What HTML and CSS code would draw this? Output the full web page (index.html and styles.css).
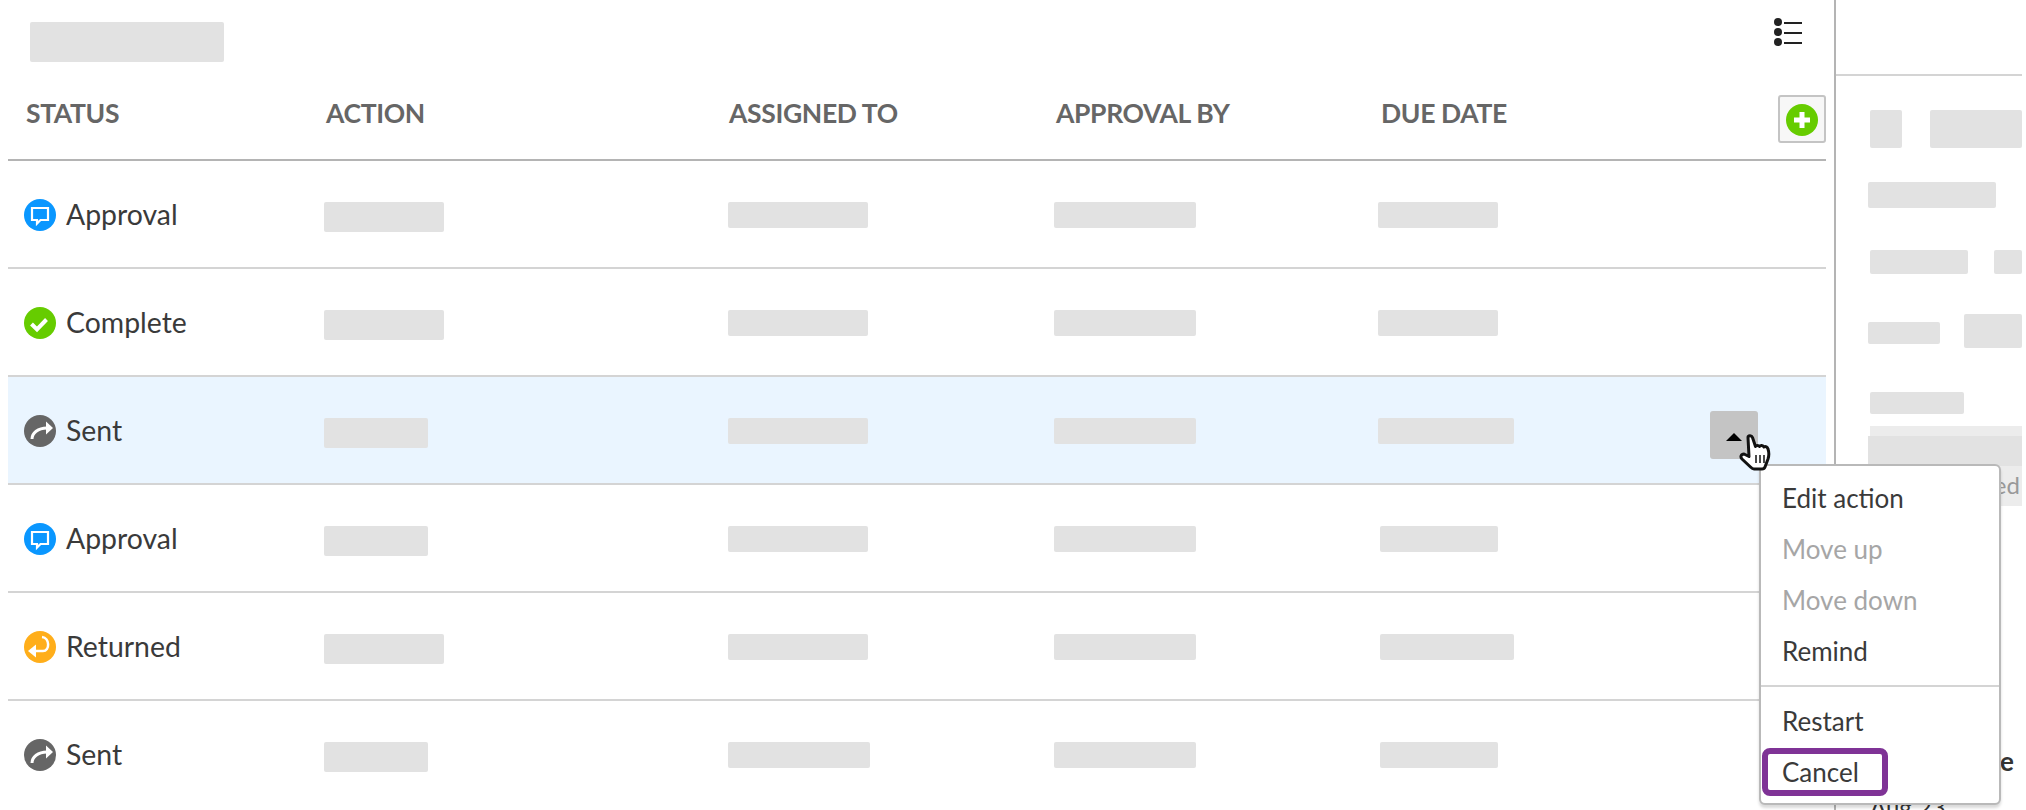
FILE: index.html
```html
<!DOCTYPE html>
<html lang="en">
<head>
<meta charset="utf-8">
<title>Actions</title>
<link rel="stylesheet" href="styles.css">
</head>
<body>
<div class="page">
  <main class="main">
    <div class="top">
      <div class="ph title-ph"></div>
      <svg class="list-icon" width="32" height="32" viewBox="0 0 32 32"><circle cx="6" cy="6" r="4"/><circle cx="6" cy="16" r="4"/><circle cx="6" cy="26" r="4"/><rect x="12" y="6" width="18" height="2"/><rect x="12" y="16" width="18" height="2"/><rect x="12" y="26" width="18" height="2"/></svg>
    </div>
    <div class="row head">
      <div class="hc first">STATUS</div><div class="hc">ACTION</div><div class="hc assigned">ASSIGNED TO</div><div class="hc">APPROVAL BY</div><div class="hc due">DUE DATE</div>
      <div class="add"><svg width="32" height="32" viewBox="0 0 32 32"><circle cx="16" cy="16" r="16" fill="#66cc00"/><path d="M8 16h16M16 8v16" stroke="#fff" stroke-width="5"/></svg></div>
    </div>
    <div class="row">
      <div class="status"><svg class="ico" viewBox="0 0 32 32"><circle cx="16" cy="16" r="16" fill="#0a97ff"/><path d="M8 9h16v12h-7.500l-3.500 3.500v-3.500h-5z" fill="none" stroke="#fff" stroke-width="2.200"/></svg>Approval</div>
      <div class="ph w120"></div><div class="ph w140"></div><div class="ph w142"></div><div class="ph w120"></div>
    </div>
    <div class="row">
      <div class="status"><svg class="ico" viewBox="0 0 32 32"><circle cx="16" cy="16" r="16" fill="#66cc00"/><path d="M7.500 17l5.500 5.500 9.500-10" fill="none" stroke="#fff" stroke-width="4"/></svg>Complete</div>
      <div class="ph w120"></div><div class="ph w140"></div><div class="ph w142"></div><div class="ph w120"></div>
    </div>
    <div class="row active">
      <div class="status"><svg class="ico" viewBox="0 0 32 32"><circle cx="16" cy="16" r="16" fill="#666"/><path d="M8 24c0-6 6-11 15-11" fill="none" stroke="#fff" stroke-width="3"/><path d="M22 6.500l7 6.500-7 6.500z" fill="#fff"/></svg>Sent</div>
      <div class="ph w104"></div><div class="ph w140"></div><div class="ph w142"></div><div class="ph w136"></div>
      <div class="toggle"><span class="caret"></span></div>
    </div>
    <div class="row">
      <div class="status"><svg class="ico" viewBox="0 0 32 32"><circle cx="16" cy="16" r="16" fill="#0a97ff"/><path d="M8 9h16v12h-7.500l-3.500 3.500v-3.500h-5z" fill="none" stroke="#fff" stroke-width="2.200"/></svg>Approval</div>
      <div class="ph w104"></div><div class="ph w140"></div><div class="ph w142"></div><div class="ph w118 nudge"></div>
    </div>
    <div class="row">
      <div class="status"><svg class="ico" viewBox="0 0 32 32"><circle cx="16" cy="16" r="16" fill="#ffae1a"/><path d="M11 20h8c7 0 7-13-1-14" fill="none" stroke="#fff" stroke-width="2.500"/><path d="M12 13.500l-8 6.500 8 6.500z" fill="#fff"/></svg>Returned</div>
      <div class="ph w120"></div><div class="ph w140"></div><div class="ph w142"></div><div class="ph w134 nudge"></div>
    </div>
    <div class="row">
      <div class="status"><svg class="ico" viewBox="0 0 32 32"><circle cx="16" cy="16" r="16" fill="#666"/><path d="M8 24c0-6 6-11 15-11" fill="none" stroke="#fff" stroke-width="3"/><path d="M22 6.500l7 6.500-7 6.500z" fill="#fff"/></svg>Sent</div>
      <div class="ph w104"></div><div class="ph w142"></div><div class="ph w142"></div><div class="ph w118 nudge"></div>
    </div>
  </main>
  <aside class="side">
    <div class="side-top"></div>
    <div class="side-body">
      <div class="line l1"><div class="ph a"></div><div class="ph b"></div></div>
      <div class="line l2"><div class="ph c"></div></div>
      <div class="line l3"><div class="ph d"></div><div class="ph e"></div></div>
      <div class="line l4"><div class="ph f"></div><div class="ph g"></div></div>
      <div class="line l5"><div class="ph h"></div></div>
      <div class="note">
        <div class="ph note-inner"></div>
        <div class="note-text">Completed</div>
      </div>
      <div class="due-label">Due date</div>
      <div class="due-value">Aug 23</div>
    </div>
  </aside>
  <div class="menu">
    <div class="item">Edit action</div>
    <div class="item off">Move up</div>
    <div class="item off">Move down</div>
    <div class="item">Remind</div>
    <div class="sep"></div>
    <div class="item">Restart</div>
    <div class="item sel">Cancel</div>
  </div>
  <svg class="hand" width="34" height="38" viewBox="0 0 34 38"><path d="M9 3.500c0-2 3.500-2.500 4.500 0l3 9c1-1.500 3-1.500 4 0 1-1.500 3.500-1.500 4.500.5 1.500-1 3.500 0 4 2 1 3 1 7 0 10l-3 8c-.5 1.500-1.500 2-3 2H15c-1.500 0-2.500-1-3.500-2L3 25c-2-2-1-5 2-5l5 2.500z" fill="#fff" stroke="#111" stroke-width="3" stroke-linejoin="round"/><path d="M17 21v8M21 21v8M25 21v8" stroke="#111" stroke-width="1.500"/></svg>
</div>
</body>
</html>
```
FILE: styles.css
```css
* { box-sizing: border-box; }
html, body { margin: 0; padding: 0; }
body { background: #fff; font-family: Lato, "Open Sans", sans-serif; color: #3a3a3a; }
.page { position: relative; width: 2026px; height: 810px; overflow: hidden; display: flex; }
.main { width: 1834px; flex: none; padding: 0 8px; display: flex; flex-direction: column; }
.side { width: 192px; flex: none; border-left: 2px solid #b4b4b4; height: 810px; }
.ph { background: #e2e2e2; border-radius: 2px; height: 30px; margin-top: 41px; }

.top { height: 95px; display: flex; justify-content: space-between; padding-left: 22px; }
.title-ph { width: 194px; height: 40px; margin-top: 22px; }
.list-icon { fill: #222; margin: 16px 22px 0 0; }

.row {
  display: grid;
  grid-template-columns: 316px 404px 326px 324px 1fr;
  height: 108px;
  border-bottom: 2px solid #d4d4d4;
  position: relative;
}
.row:last-child { border-bottom: 0; }
.row.active { background: #eaf5ff; }
.row > .ph { justify-self: start; }
.row > .ph:nth-child(n+3) { height: 26px; }

.head { height: 66px; border-bottom-color: #b4b4b4; font-size: 26.5px; font-weight: 700; color: #666; padding-top: 2px; letter-spacing: -0.35px; }
.hc { padding-left: 2px; }
.hc.first { padding-left: 18px; }
.hc.assigned { padding-left: 1px; }
.hc.due { padding-left: 3px; }
.add {
  position: absolute; right: 0; top: 0;
  width: 48px; height: 48px; padding: 7px 0 0 6px;
  background: #f7f7f7; border: 2px solid #c4c4c4; border-radius: 3px;
}
.add svg { display: block; }

.status { display: flex; align-items: flex-start; font-size: 28.4px; line-height: 34px; padding: 36px 0 0 16px; }
.ico { width: 32px; height: 32px; margin: 2px 10px 0 0; flex: none; }

.w104 { width: 104px; }
.w118 { width: 118px; }
.w120 { width: 120px; }
.w134 { width: 134px; }
.w136 { width: 136px; }
.w140 { width: 140px; }
.w142 { width: 142px; }
.nudge { margin-left: 2px; }

.toggle {
  position: absolute; left: 1702px; top: 34px;
  width: 48px; height: 48px; background: #c4c4c4; border-radius: 3px;
  display: flex; justify-content: center; padding-top: 22px;
}
.caret { width: 0; height: 0; border: 8px solid transparent; border-top: 0; border-bottom-color: #000; }

.side-top { height: 76px; border-bottom: 2px solid #d4d4d4; margin-right: 4px; }
.side-body { position: relative; padding-right: 4px; }
.line { display: flex; }
.line .ph { margin-top: 0; }
.l1 { padding: 34px 0 0 34px; }
.a { width: 32px; height: 38px; margin-right: 28px; }
.b { width: 92px; height: 38px; }
.l2 { padding: 34px 0 0 32px; }
.c { width: 128px; height: 26px; }
.l3 { padding: 42px 0 0 34px; }
.d { width: 98px; height: 24px; margin-right: 26px; }
.e { width: 28px; height: 24px; }
.l4 { padding: 40px 0 0 32px; align-items: flex-end; }
.line .f { width: 72px; height: 22px; margin: 0 24px 4px 0; }
.g { width: 58px; height: 34px; }
.l5 { padding: 44px 0 0 34px; }
.h { width: 94px; height: 22px; }
.note { margin: 12px 0 0 34px; height: 80px; background: #ececec; position: relative; padding-top: 10px; }
.note-inner { height: 30px; margin: 0 0 0 -2px; border-radius: 0; }
.note-text { font-size: 24px; color: #999; text-align: right; padding-right: 2px; line-height: 38px; }
.due-label { position: absolute; right: 12px; top: 669px; font-size: 26px; font-weight: 700; color: #333; white-space: nowrap; }
.due-value { position: absolute; left: 34px; top: 716px; font-size: 24px; color: #333; }

.menu {
  position: absolute; left: 1759px; top: 464px;
  width: 242px; height: 341px;
  background: #fff; border: 2px solid #b9b9b9; border-radius: 6px;
  box-shadow: 0 3px 3px rgba(0,0,0,.15);
  padding-top: 7px;
}
.item { font-size: 26px; line-height: 51px; padding-left: 21px; height: 51px; color: #3a3a3a; }
.item.off { color: #a6a6a6; }
.sep { height: 2px; background: #d4d4d4; margin: 8px 0 9px; }
.item.sel {
  width: 126px; height: 48px; line-height: 36px; margin-left: 1px; padding-left: 14px;
  margin-top: 1px;
  border: 6px solid #7f3396; border-radius: 8px;
}
.hand { position: absolute; left: 1739px; top: 434px; }
```
